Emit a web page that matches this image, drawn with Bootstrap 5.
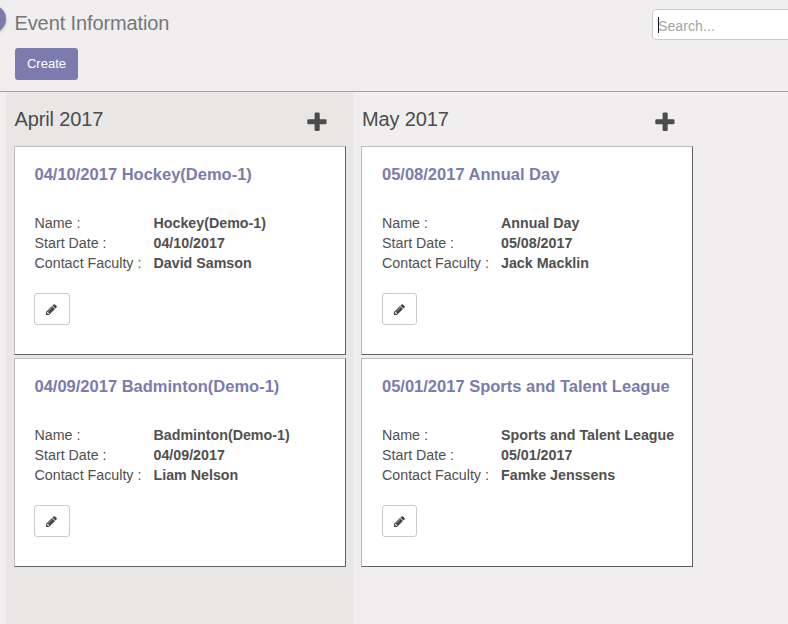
<!DOCTYPE html>
<html lang="en">
<head>
<meta charset="utf-8">
<meta name="viewport" content="width=device-width, initial-scale=1">
<title>Event Information</title>
<link href="https://cdn.jsdelivr.net/npm/bootstrap@5.3.0/dist/css/bootstrap.min.css" rel="stylesheet">
<style>
body{font-family:"Liberation Sans",Arial,sans-serif;font-size:14px;line-height:20px;color:#4c4c4c;background:#f0eeee}
.app{height:624px}
.control-panel{height:92px;border-bottom:1px solid #a5a3a3;padding:9px 0 0 15px}
.page-name{font-size:20px;line-height:28px;color:#777;margin:0 0 11px -.5px;letter-spacing:-.11px}
.btn-create{width:63px;height:32px;font-size:13px;line-height:20px;border-radius:3px;background:#7c7bad;color:#fff;padding:5px 0}
.btn-create:hover{background:#6b6aa0;color:#fff}
.knob{width:28px;height:28px;left:-22px;top:5px;background:#7c7bad;box-shadow:0 1px 3px #8888}
.search{width:150px;height:31px;margin-right:-14px;border:1px solid #ccc;border-radius:4px;background:#fff;color:#a3a3a3;padding:5px}
.caret{width:1px;height:16px;background:#111}
.hint{padding-top:2px;margin-left:-1px;letter-spacing:.1px}
.board{padding-left:6px}
.lane{width:347px;padding:0 7px 0 8px}
.lane-apr{background:#e8e7e5}
.lane-head{height:54px;padding:13px 19px 0 .5px}
.lane-title{font-size:20px;line-height:28px;color:#4c4c4c;letter-spacing:-.12px}
.lane-may .lane-head{padding-left:1px;padding-right:18px}
.plus{margin-top:6.5px}
.event{height:209px;margin-bottom:3px;background:#fff;border:1px solid;border-color:#bdbbbb #626062 #626062 #bdbbbb;padding:17px 0 0 19.5px;font-size:14.25px;color:#505050}
.event-title{font-size:16.5px;line-height:20px;color:#7c7bad;margin-bottom:29px;white-space:nowrap}
.lane-may .event{padding-left:20px}
.label-col{width:119px}
.btn-edit{width:36px;height:32px;border:1px solid #ccc;border-radius:3px;background:#fff;margin:20px 0 0 -.6px}
.lane-may .btn-edit{width:35px;margin-left:0}
</style>
<script src="https://cdn.jsdelivr.net/npm/bootstrap@5.3.0/dist/js/bootstrap.bundle.min.js"></script>
</head>
<body class="overflow-hidden">
<svg class="d-none">
<symbol id="plus" viewBox="0 0 20 20"><path fill="#4c4c4c" d="M8.800 0.500h2.700q1.200 0 1.200 1.200V7.300h5.600q1.200 0 1.200 1.200v2.500q0 1.200-1.200 1.200h-5.600v5.600q0 1.200-1.200 1.200H8.800q-1.200 0-1.200-1.200v-5.600H1.500q-1.200 0-1.200-1.200V8.500q0-1.200 1.200-1.200h6.100V1.700q0-1.200 1.200-1.200z"/></symbol>
<symbol id="pencil" viewBox="0 0 1536 1536"><path fill="#444" d="M363 1408l91-91-235-235-91 91v107h128v128h107zM886 480q0-22-22-22-10 0-17 7l-542 542q-7 7-7 17 0 22 22 22 10 0 17-7l542-542q7-7 7-17zM832 288l416 416-832 832H0v-416zM1515 384q0 53-37 90l-166 166-416-416 166-165q36-38 90-38 53 0 91 38l235 234q37 39 37 91z"/></symbol>
</svg>
<div class="app d-flex flex-column overflow-hidden">
  <header class="control-panel d-flex justify-content-between align-items-start position-relative flex-shrink-0">
    <span class="knob rounded-circle position-absolute"></span>
    <div>
      <h1 class="page-name fw-normal">Event Information</h1>
      <button class="btn btn-create border-0 d-block">Create</button>
    </div>
    <div class="search d-flex align-items-center flex-shrink-0"><span class="caret"></span><span class="hint">Search...</span></div>
  </header>
  <main class="board d-flex flex-grow-1">
    <section class="lane lane-apr flex-shrink-0">
      <div class="lane-head d-flex justify-content-between align-items-start">
        <h2 class="lane-title fw-normal mb-0">April 2017</h2>
        <svg class="plus" width="20" height="20"><use href="#plus"/></svg>
      </div>
      <article class="event">
        <h3 class="event-title fw-bold">04/10/2017 Hockey(Demo-1)</h3>
        <div class="d-flex"><span class="label-col">Name :</span><b>Hockey(Demo-1)</b></div>
        <div class="d-flex"><span class="label-col">Start Date :</span><b>04/10/2017</b></div>
        <div class="d-flex"><span class="label-col">Contact Faculty :</span><b>David Samson</b></div>
        <button class="btn-edit d-flex align-items-center justify-content-center p-0" aria-label="Edit"><svg width="11" height="11"><use href="#pencil"/></svg></button>
      </article>
      <article class="event">
        <h3 class="event-title fw-bold">04/09/2017 Badminton(Demo-1)</h3>
        <div class="d-flex"><span class="label-col">Name :</span><b>Badminton(Demo-1)</b></div>
        <div class="d-flex"><span class="label-col">Start Date :</span><b>04/09/2017</b></div>
        <div class="d-flex"><span class="label-col">Contact Faculty :</span><b>Liam Nelson</b></div>
        <button class="btn-edit d-flex align-items-center justify-content-center p-0" aria-label="Edit"><svg width="11" height="11"><use href="#pencil"/></svg></button>
      </article>
    </section>
    <section class="lane lane-may flex-shrink-0">
      <div class="lane-head d-flex justify-content-between align-items-start">
        <h2 class="lane-title fw-normal mb-0">May 2017</h2>
        <svg class="plus" width="20" height="20"><use href="#plus"/></svg>
      </div>
      <article class="event">
        <h3 class="event-title fw-bold">05/08/2017 Annual Day</h3>
        <div class="d-flex"><span class="label-col">Name :</span><b>Annual Day</b></div>
        <div class="d-flex"><span class="label-col">Start Date :</span><b>05/08/2017</b></div>
        <div class="d-flex"><span class="label-col">Contact Faculty :</span><b>Jack Macklin</b></div>
        <button class="btn-edit d-flex align-items-center justify-content-center p-0" aria-label="Edit"><svg width="11" height="11"><use href="#pencil"/></svg></button>
      </article>
      <article class="event">
        <h3 class="event-title fw-bold">05/01/2017 Sports and Talent League</h3>
        <div class="d-flex"><span class="label-col">Name :</span><b>Sports and Talent League</b></div>
        <div class="d-flex"><span class="label-col">Start Date :</span><b>05/01/2017</b></div>
        <div class="d-flex"><span class="label-col">Contact Faculty :</span><b>Famke Jenssens</b></div>
        <button class="btn-edit d-flex align-items-center justify-content-center p-0" aria-label="Edit"><svg width="11" height="11"><use href="#pencil"/></svg></button>
      </article>
    </section>
  </main>
</div>
</body>
</html>
